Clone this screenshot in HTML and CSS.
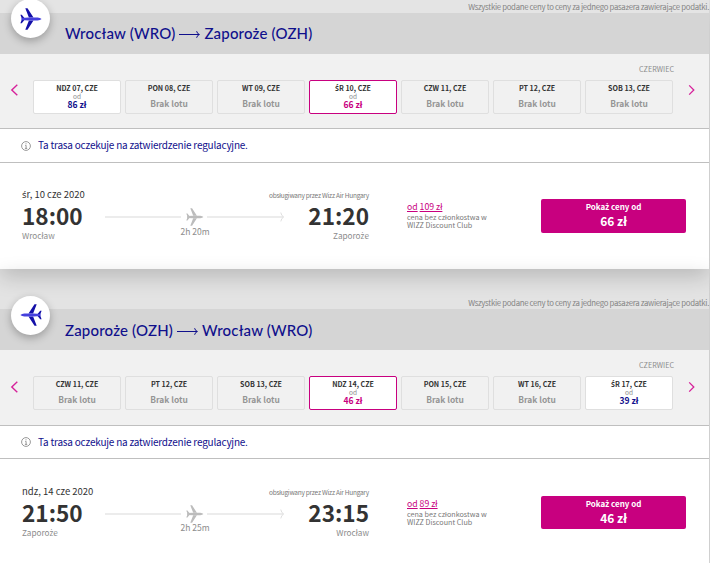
FILE: index.html
```
<!DOCTYPE html>
<html lang="pl">
<head>
    <meta charset="UTF-8">
    <meta name="viewport" content="width=device-width, initial-scale=1.0">
    <title>Wybór lotu</title>
    <link rel="stylesheet" href="styles.css">
</head>
<body>
    <!-- shared icons -->
    <svg class="sprite" aria-hidden="true">
        <symbol id="plane" viewBox="0 0 22 22">
            <path class="plane-wing" d="M5.3 0.3h2.2l6 9.2h-4.6zM5.3 21.7h2.2l6-9.2h-4.6zM0.4 6.8h1.4l2.6 3.2h-2.8zM0.4 15.2h1.4l2.6-3.2h-2.8z"/>
            <path class="plane-body" d="M1.4 9.9l7-0.5h9.2q2.6 0.3 4 1.6q-1.4 1.3-4 1.6h-9.2l-7-0.5z"/>
        </symbol>
        <symbol id="arrow" viewBox="0 0 21 9">
            <path d="M0 4.5h20.2M17.6 1.2q0.6 2.6 2.8 3.3q-2.2 0.7-2.8 3.3" fill="none" stroke="#10108c" stroke-width="1"/>
        </symbol>
        <symbol id="info" viewBox="0 0 10 10">
            <circle cx="5" cy="5" r="4.4" fill="none" stroke="#8c8c8c" stroke-width="0.9"/>
            <path d="M5 2.3v1M4.2 4.4h0.9v3M3.9 7.4h2.3" fill="none" stroke="#8c8c8c" stroke-width="0.9"/>
        </symbol>
        <symbol id="prev" viewBox="0 0 8 12">
            <path d="M7.3 0.8L1.8 6l5.5 5.2" fill="none" stroke="#d6219a" stroke-width="1.4"/>
        </symbol>
        <symbol id="next" viewBox="0 0 8 12">
            <path d="M1.2 1.4L5.8 6l-4.6 4.6" fill="none" stroke="#d6219a" stroke-width="1.3"/>
        </symbol>
        <symbol id="tip" viewBox="0 0 5 10">
            <path d="M0.8 0.5q0.6 3.4 3 4.5q-2.4 1.1-3 4.5" fill="none" stroke="#dedede" stroke-width="1"/>
        </symbol>
    </svg>

    <section class="trip outbound">
        <p class="note">Wszystkie podane ceny to ceny za jednego pasa<span class="pl">ż</span>era zawierające podatki.</p>
        <header class="title-bar">
            <span class="badge"><svg class="badge-plane"><use href="#plane"/></svg></span>
            <h2 class="route"><span>Wrocław (WRO)</span><svg class="route-arrow"><use href="#arrow"/></svg><span>Zaporoże (OZH)</span></h2>
        </header>
        <div class="calendar">
            <p class="month">CZERWIEC</p>
            <div class="days-row">
                <svg class="nav"><use href="#prev"/></svg>
                <div class="days">
                    <div class="day available"><b>NDZ 07, CZE</b><i>od</i><strong>86 zł</strong></div>
                    <div class="day"><b>PON 08, CZE</b><em>Brak lotu</em></div>
                    <div class="day"><b>WT 09, CZE</b><em>Brak lotu</em></div>
                    <div class="day selected"><b><span class="pl">Ś</span>R 10, CZE</b><i>od</i><strong>66 zł</strong></div>
                    <div class="day"><b>CZW 11, CZE</b><em>Brak lotu</em></div>
                    <div class="day"><b>PT 12, CZE</b><em>Brak lotu</em></div>
                    <div class="day"><b>SOB 13, CZE</b><em>Brak lotu</em></div>
                </div>
                <svg class="nav"><use href="#next"/></svg>
            </div>
        </div>
        <div class="notice">
            <svg class="info-icon"><use href="#info"/></svg>
            <span>Ta trasa oczekuje na zatwierdzenie regulacyjne.</span>
        </div>
        <div class="flight">
            <div class="departure">
                <p class="date"><span class="pl">ś</span>r, 10 cze 2020</p>
                <p class="time">18:00</p>
                <p class="city">Wrocław</p>
            </div>
            <div class="path">
                <div class="path-line"><span class="line"></span><svg class="path-plane"><use href="#plane"/></svg><span class="line"></span><svg class="tip"><use href="#tip"/></svg></div>
                <p class="duration">2h 20m</p>
            </div>
            <div class="arrival">
                <p class="operator">obsługiwany przez Wizz Air Hungary</p>
                <p class="time">21:20</p>
                <p class="city">Zaporo<span class="pl">ż</span>e</p>
            </div>
            <div class="club">
                <p class="club-price"><a>od</a> <a>109 zł</a></p>
                <p class="club-text">cena bez członkostwa w<br>WIZZ Discount Club</p>
            </div>
            <button class="buy"><span>Poka<span class="pl">ż</span> ceny od</span><strong>66 zł</strong></button>
        </div>
    </section>

    <section class="trip return">
        <p class="note">Wszystkie podane ceny to ceny za jednego pasa<span class="pl">ż</span>era zawierające podatki.</p>
        <header class="title-bar">
            <span class="badge"><svg class="badge-plane"><use href="#plane"/></svg></span>
            <h2 class="route"><span>Zaporoże (OZH)</span><svg class="route-arrow"><use href="#arrow"/></svg><span>Wrocław (WRO)</span></h2>
        </header>
        <div class="calendar">
            <p class="month">CZERWIEC</p>
            <div class="days-row">
                <svg class="nav"><use href="#prev"/></svg>
                <div class="days">
                    <div class="day"><b>CZW 11, CZE</b><em>Brak lotu</em></div>
                    <div class="day"><b>PT 12, CZE</b><em>Brak lotu</em></div>
                    <div class="day"><b>SOB 13, CZE</b><em>Brak lotu</em></div>
                    <div class="day selected"><b>NDZ 14, CZE</b><i>od</i><strong>46 zł</strong></div>
                    <div class="day"><b>PON 15, CZE</b><em>Brak lotu</em></div>
                    <div class="day"><b>WT 16, CZE</b><em>Brak lotu</em></div>
                    <div class="day available"><b><span class="pl">Ś</span>R 17, CZE</b><i>od</i><strong>39 zł</strong></div>
                </div>
                <svg class="nav"><use href="#next"/></svg>
            </div>
        </div>
        <div class="notice">
            <svg class="info-icon"><use href="#info"/></svg>
            <span>Ta trasa oczekuje na zatwierdzenie regulacyjne.</span>
        </div>
        <div class="flight">
            <div class="departure">
                <p class="date">ndz, 14 cze 2020</p>
                <p class="time">21:50</p>
                <p class="city">Zaporo<span class="pl">ż</span>e</p>
            </div>
            <div class="path">
                <div class="path-line"><span class="line"></span><svg class="path-plane"><use href="#plane"/></svg><span class="line"></span><svg class="tip"><use href="#tip"/></svg></div>
                <p class="duration">2h 25m</p>
            </div>
            <div class="arrival">
                <p class="operator">obsługiwany przez Wizz Air Hungary</p>
                <p class="time">23:15</p>
                <p class="city">Wrocław</p>
            </div>
            <div class="club">
                <p class="club-price"><a>od</a> <a>89 zł</a></p>
                <p class="club-text">cena bez członkostwa w<br>WIZZ Discount Club</p>
            </div>
            <button class="buy"><span>Poka<span class="pl">ż</span> ceny od</span><strong>46 zł</strong></button>
        </div>
    </section>
</body>
</html>
```
FILE: styles.css
```
* {
    box-sizing: border-box;
}
body {
    margin: 0;
    height: 563px;
    overflow: hidden;
    background: #e3e3e3;
    font-family: "Noto Sans CJK SC", "Noto Sans", sans-serif;
    color: #333;
}
p, h2 {
    margin: 0;
}
.sprite {
    display: block;
    width: 0;
    height: 0;
}
.pl {
    font-family: "Noto Sans", "Open Sans", sans-serif;
    line-height: 1;
}
.trip {
    width: 709px;
    box-shadow: 0 8px 20px rgba(0, 0, 0, 0.18);
}
.note {
    height: 13px;
    line-height: 13px;
    font-size: 7.8px;
    letter-spacing: -0.31px;
    text-align: right;
    color: #858585;
    background: #e4e4e4;
    white-space: nowrap;
}
.return .note {
    height: 40px;
    padding-top: 28px;
    line-height: 12px;
    background: none;
}
.title-bar {
    display: flex;
    align-items: center;
    height: 41px;
    background: #d5d5d5;
}
.badge {
    display: flex;
    align-items: center;
    justify-content: center;
    width: 39px;
    height: 39px;
    margin: -30px 15px 0 11px;
    border-radius: 50%;
    background: #fff;
    box-shadow: 0 3px 8px rgba(0, 0, 0, 0.28);
}
.return .badge {
    margin-top: -29px;
}
.badge-plane {
    width: 22px;
    height: 22px;
}
.return .badge-plane {
    transform: scaleX(-1);
}
.plane-wing {
    fill: var(--wing, #1410a8);
}
.plane-body {
    fill: var(--fuselage, #4540dd);
}
.route {
    display: flex;
    align-items: center;
    margin-top: -2px;
    font-family: Lato, sans-serif;
    font-size: 15px;
    font-weight: 500;
    line-height: 20px;
    letter-spacing: 0.18px;
    color: #10108c;
}
.return .route {
    margin-top: 0;
}
.route-arrow {
    width: 21px;
    height: 9px;
    margin: 4px 4px 0 4px;
}
.calendar {
    height: 75px;
    padding-top: 9px;
    background: #f1f1f1;
    border-bottom: 1px solid #bfbfbf;
}
.return .calendar {
    height: 76px;
}
.month {
    height: 17px;
    padding-right: 35px;
    line-height: 13px;
    font-size: 7.2px;
    text-align: right;
    color: #8c8c8c;
}
.days-row {
    display: flex;
    height: 34px;
    padding-left: 10px;
}
.nav {
    width: 8px;
    height: 12px;
    margin-top: 4px;
}
.return .nav {
    margin-top: 5px;
}
.days {
    display: flex;
    gap: 4px;
    margin: 0 15px;
}
.day {
    display: flex;
    flex-direction: column;
    align-items: center;
    width: 88px;
    height: 34px;
    border: 1px solid #dfdfdf;
    border-radius: 2px;
    white-space: nowrap;
}
.day b {
    height: 12px;
    line-height: 14px;
    font-size: 7.1px;
}
.day i {
    height: 6px;
    line-height: 6px;
    font-size: 6.5px;
    font-style: normal;
    color: #8c8c8c;
}
.day strong {
    line-height: 10px;
    font-size: 8.5px;
    color: #10108c;
}
.day em {
    padding-top: 4px;
    line-height: 13px;
    font-size: 8.4px;
    font-style: normal;
    font-weight: bold;
    color: #959595;
}
.day.available, .day.selected {
    background: #fff;
}
.day.selected {
    border-color: #c8007f;
}
.day.selected strong {
    color: #c8007f;
}
.notice {
    display: flex;
    align-items: center;
    gap: 7px;
    height: 34px;
    padding-left: 21px;
    font-size: 10px;
    line-height: 14px;
    letter-spacing: -0.21px;
    color: #10108c;
    background: #fff;
    border-bottom: 1px solid #bfbfbf;
}
.notice span {
    margin-top: -1px;
}
.return .notice {
    height: 33px;
}
.info-icon {
    width: 10px;
    height: 10px;
}
.flight {
    display: flex;
    height: 106px;
    padding: 25px 23px 0 22px;
    background: #fff;
}
.return .flight {
    padding-top: 26px;
}
.departure {
    width: 83px;
}
.date, .operator {
    height: 13px;
    line-height: 13px;
    font-size: 9.5px;
    white-space: nowrap;
}
.operator {
    line-height: 15px;
    font-size: 6.5px;
    letter-spacing: -0.24px;
    color: #777;
}
.time {
    height: 28px;
    line-height: 30px;
    font-size: 22.6px;
    font-weight: bold;
}
.city {
    line-height: 13px;
    font-size: 8.2px;
    color: #8c8c8c;
}
.path {
    width: 180px;
    padding-top: 20px;
}
.path-line {
    display: flex;
    align-items: center;
    height: 18px;
}
.line {
    width: 77px;
    height: 2px;
    background: #ececec;
}
.path-plane {
    --wing: #bcbcbc;
    --fuselage: #bcbcbc;
    width: 18px;
    height: 18px;
    margin: 0 3px 0 5px;
}
.tip {
    width: 5px;
    height: 10px;
    margin-left: -3px;
}
.duration {
    margin-top: -1px;
    line-height: 13px;
    font-size: 8.5px;
    text-align: center;
    color: #8c8c8c;
}
.return .duration {
    margin-top: -2px;
}
.arrival {
    display: flex;
    flex-direction: column;
    align-items: flex-end;
    width: 84px;
}
.club {
    width: 134px;
    margin-left: 38px;
    padding-top: 12px;
    color: #777;
}
.club-price {
    height: 13px;
    line-height: 13px;
    font-size: 8.7px;
    color: #c8007f;
}
.club-price a {
    text-decoration: underline;
}
.club-text {
    line-height: 8px;
    font-size: 7.2px;
    white-space: nowrap;
}
.buy {
    display: flex;
    flex-direction: column;
    align-items: center;
    width: 145px;
    height: 34px;
    margin-top: 11px;
    padding: 1px 0 0;
    border: 0;
    border-radius: 2px;
    background: #c8007f;
    color: #fff;
    font-family: inherit;
}
.buy > span {
    height: 13px;
    line-height: 13px;
    font-size: 8px;
    font-weight: bold;
}
.buy strong {
    line-height: 15px;
    font-size: 12px;
}
.return .buy {
    height: 33px;
}
```
